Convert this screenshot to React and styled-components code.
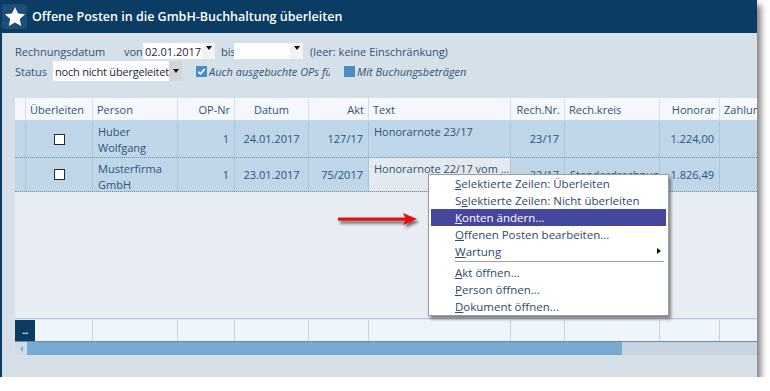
import React from 'react';
import styled, { createGlobalStyle } from 'styled-components';

const GlobalStyle = createGlobalStyle`
  html, body { margin: 0; padding: 0; background: #ffffff; }
  body { font-family: "Open Sans", "Noto Sans", sans-serif; }
`;

const columns = [
  { title: '', align: 'left' },
  { title: 'Überleiten', align: 'left' },
  { title: 'Person', align: 'left' },
  { title: 'OP-Nr', align: 'right' },
  { title: 'Datum', align: 'center' },
  { title: 'Akt', align: 'right' },
  { title: 'Text', align: 'left' },
  { title: 'Rech.Nr.', align: 'right' },
  { title: 'Rech.kreis', align: 'left' },
  { title: 'Honorar', align: 'right' },
  { title: 'Zahlungen', align: 'left' },
];

const rows = [
  {
    person: ['Huber', 'Wolfgang'], op: '1', datum: '24.01.2017', akt: '127/17',
    text: 'Honorarnote 23/17', rechNr: '23/17', kreis: '', honorar: '1.224,00', height: 37,
  },
  {
    person: ['Musterfirma', 'GmbH'], op: '1', datum: '23.01.2017', akt: '75/2017',
    text: 'Honorarnote 22/17 vom ...', rechNr: '22/17', kreis: 'Standardrechnung',
    honorar: '1.826,49', height: 34, focus: true,
  },
];

const menuItems = [
  { pre: '', u: 'S', rest: 'elektierte Zeilen: Überleiten' },
  { pre: 'S', u: 'e', rest: 'lektierte Zeilen: Nicht überleiten' },
  { pre: '', u: 'K', rest: 'onten ändern...', active: true },
  { pre: '', u: 'O', rest: 'ffenen Posten bearbeiten...' },
  { pre: '', u: 'W', rest: 'artung', sub: true },
  'sep',
  { pre: '', u: 'A', rest: 'kt öffnen...' },
  { pre: '', u: 'P', rest: 'erson öffnen...' },
  { pre: '', u: 'D', rest: 'okument öffnen...' },
];

const GRID = '11px 67px 85px 57px 74px 60px 142px 54px 95px 60px 80px';

const StarIcon = () => (
  <svg width="22" height="22" viewBox="0 0 24 24">
    <path
      fill="#ffffff"
      d="M12 1l3.3 7.1 7.7.9-5.8 5.2 1.6 7.7L12 18l-6.8 3.9 1.6-7.7L1 9l7.7-.9z"
    />
  </svg>
);

const CheckMark = () => (
  <svg width="9" height="9" viewBox="0 0 10 10">
    <path d="M1.5 5.2l2.3 2.3L8.6 2.2" fill="none" stroke="#ffffff" strokeWidth="1.8" />
  </svg>
);

const RedArrow = () => (
  <ArrowWrap>
    <svg width="92" height="22" viewBox="0 0 92 22">
      <defs>
        <filter id="arrowShadow" x="-10%" y="-50%" width="130%" height="220%">
          <feDropShadow dx="2" dy="3" stdDeviation="1.6" floodColor="#000" floodOpacity="0.55" />
        </filter>
      </defs>
      <g filter="url(#arrowShadow)">
        <rect x="2" y="6.5" width="70" height="3.2" fill="#e8100c" />
        <path d="M67 2 L81 8.1 L67 14 L70 8.1 Z" fill="#e8100c" />
      </g>
    </svg>
  </ArrowWrap>
);

export default function App() {
  return (
    <>
      <GlobalStyle />
      <Window>
        <TitleBar>
          <StarBox><StarIcon /></StarBox>
          <Title>Offene Posten in die GmbH-Buchhaltung überleiten</Title>
        </TitleBar>
        <Body>
          <FilterRow>
            <Label $w={109}>Rechnungsdatum</Label>
            <Label $w={19}>von</Label>
            <Combo $w={72}>
              <ComboText>02.01.2017</ComboText>
              <DropButton><Triangle /></DropButton>
            </Combo>
            <Label $w={13} $ml={6}>bis</Label>
            <Combo $w={69}>
              <ComboText />
              <DropButton><Triangle /></DropButton>
            </Combo>
            <Label $ml={7}>(leer: keine Einschränkung)</Label>
          </FilterRow>
          <FilterRow $h={20}>
            <Label $w={38}>Status</Label>
            <Combo $w={129} $h={20}>
              <ComboText $tight>noch nicht übergeleitet</ComboText>
              <DropButton $gray><Triangle /></DropButton>
            </Combo>
            <CheckBlue $ml={14}><CheckMark /></CheckBlue>
            <Option $w={121}>Auch ausgebuchte OPs für Zeitraum</Option>
            <CheckBlue $ml={14} />
            <Option>Mit Buchungsbeträgen</Option>
          </FilterRow>

          <Table>
            <HeaderRow>
              {columns.map((c, i) => (
                <HeadCell key={i} $align={c.align}>{c.title}</HeadCell>
              ))}
            </HeaderRow>
            {rows.map((r, i) => (
              <DataRow key={i} $h={r.height}>
                <Cell />
                <Cell $align="center"><Box /></Cell>
                <Cell $top>{r.person[0]}<br />{r.person[1]}</Cell>
                <Cell $align="right">{r.op}</Cell>
                <Cell $align="center">{r.datum}</Cell>
                <Cell $align="right">{r.akt}</Cell>
                <Cell $top $focus={r.focus}>{r.text}</Cell>
                <Cell $align="right">{r.rechNr}</Cell>
                <Cell>{r.kreis}</Cell>
                <Cell $align="right">{r.honorar}</Cell>
                <Cell />
              </DataRow>
            ))}
            <EmptyArea />
            <FooterRow>
              <MoreButton>...</MoreButton>
              {columns.slice(1).map((c, i) => <FootCell key={i} />)}
            </FooterRow>
            <ScrollBar>
              <ScrollLeft><SmallLeft /></ScrollLeft>
              <Thumb />
            </ScrollBar>
          </Table>
        </Body>

        <Menu>
          {menuItems.map((m, i) =>
            m === 'sep' ? (
              <Separator key={i} />
            ) : (
              <MenuItem key={i} $active={m.active}>
                {m.pre}<u>{m.u}</u>{m.rest}
                {m.sub && <SubArrow />}
              </MenuItem>
            )
          )}
        </Menu>
        <RedArrow />
      </Window>
    </>
  );
}

const Window = styled.div`
  position: relative;
  width: 755px;
  height: 377px;
  border-left: 2px solid #0b3c64;
  display: flex;
  flex-direction: column;
  box-shadow: 4px 5px 6px rgba(0, 0, 0, 0.5);
  background: #d5e0e9;
`;

const TitleBar = styled.div`
  height: 33px;
  background: #0b3c64;
  display: flex;
  align-items: center;
  gap: 5px;
  flex-shrink: 0;
`;

const StarBox = styled.div`
  width: 25px;
  height: 25px;
  border-radius: 3px;
  background: #1c4e79;
  display: flex;
  align-items: center;
  justify-content: center;
`;

const Title = styled.div`
  color: #ffffff;
  font-size: 12.5px;
  font-weight: 600;
`;

const Body = styled.div`
  flex: 1;
  padding: 9px 0 0 13px;
  overflow: hidden;
  font-size: 11px;
  color: #2f5377;
`;

const FilterRow = styled.div`
  height: ${p => p.$h || 18}px;
  margin-bottom: 1px;
  display: flex;
  align-items: center;
  white-space: nowrap;
`;

const Label = styled.span`
  width: ${p => (p.$w ? p.$w + 'px' : 'auto')};
  margin-left: ${p => p.$ml || 0}px;
  flex-shrink: 0;
`;

const Combo = styled.div`
  width: ${p => p.$w}px;
  height: ${p => p.$h || 16}px;
  background: #ffffff;
  display: flex;
  align-items: center;
  flex-shrink: 0;
`;

const ComboText = styled.span`
  flex: 1;
  min-width: 0;
  padding-left: 2px;
  font-size: 11px;
  letter-spacing: ${p => (p.$tight ? '-0.2px' : '0')};
  color: #1a2a3a;
  overflow: hidden;
`;

const DropButton = styled.span`
  width: 13px;
  height: 100%;
  background: ${p => (p.$gray ? '#d3d6d9' : '#f2f2f2')};
  display: flex;
  align-items: ${p => (p.$gray ? 'center' : 'flex-start')};
  padding-top: ${p => (p.$gray ? 0 : 3)}px;
  box-sizing: border-box;
  justify-content: center;
  flex-shrink: 0;
`;

const Triangle = styled.span`
  width: 0;
  height: 0;
  border-left: 3.5px solid transparent;
  border-right: 3.5px solid transparent;
  border-top: 4px solid #111;
`;

const CheckBlue = styled.span`
  width: 11px;
  height: 11px;
  margin-left: ${p => p.$ml || 0}px;
  margin-right: 2px;
  background: #4a8dc6;
  display: flex;
  align-items: center;
  justify-content: center;
  flex-shrink: 0;
`;

const Option = styled.span`
  font-style: italic;
  width: ${p => (p.$w ? p.$w + 'px' : 'auto')};
  overflow: hidden;
  flex-shrink: 0;
`;

const Table = styled.div`
  margin-top: 17px;
  display: flex;
  flex-direction: column;
  overflow: hidden;
  color: #2f5377;
`;

const HeaderRow = styled.div`
  display: grid;
  grid-template-columns: ${GRID};
  height: 23px;
  background: #f4f8fc;
  border-bottom: 1px solid #c3d4e3;
  box-sizing: border-box;
`;

const HeadCell = styled.div`
  display: flex;
  align-items: center;
  justify-content: ${p => (p.$align === 'right' ? 'flex-end' : p.$align === 'center' ? 'center' : 'flex-start')};
  padding: 0 4px;
  border-right: 1px solid #d2dfea;
  white-space: nowrap;
  overflow: hidden;
`;

const DataRow = styled.div`
  display: grid;
  grid-template-columns: ${GRID};
  height: ${p => p.$h}px;
  background: #bfd5e8;
  border-bottom: 1px dotted #7f8d98;
  box-sizing: border-box;
`;

const Cell = styled.div`
  display: flex;
  flex-direction: column;
  justify-content: ${p => (p.$top ? 'flex-start' : 'center')};
  align-items: ${p => (p.$align === 'right' ? 'flex-end' : p.$align === 'center' ? 'center' : 'flex-start')};
  padding: ${p => (p.$top ? '3px 5px 0 5px' : '0 5px')};
  line-height: 16px;
  background: ${p => (p.$focus ? '#e2e9ef' : 'transparent')};
  border-right: 1px solid #a9c3d8;
  white-space: nowrap;
  overflow: hidden;
`;

const Box = styled.span`
  width: 9px;
  height: 9px;
  background: #ffffff;
  border: 1px solid #2a2a2a;
`;

const EmptyArea = styled.div`
  height: 126px;
  background: #e7edf2;
  border-bottom: 1px solid #b9cbda;
`;

const FooterRow = styled.div`
  display: grid;
  grid-template-columns: 20px 58px 85px 57px 74px 60px 142px 54px 95px 60px 80px;
  height: 23px;
  background: #eef5fc;
  border-top: 1px solid #dbe7f1;
  border-bottom: 1px solid #6a8aa6;
  box-sizing: border-box;
`;

const MoreButton = styled.div`
  background: #0b3c64;
  color: #ffffff;
  font-size: 8px;
  font-weight: 700;
  display: flex;
  align-items: center;
  justify-content: center;
  letter-spacing: -0.5px;
`;

const FootCell = styled.div`
  border-right: 1px solid #c4d3df;
`;

const ScrollBar = styled.div`
  height: 13px;
  display: flex;
  background: #c7d4df;
`;

const ScrollLeft = styled.div`
  width: 12px;
  background: #cfdbe6;
  display: flex;
  align-items: center;
  justify-content: center;
`;

const SmallLeft = styled.span`
  width: 0;
  height: 0;
  border-top: 3px solid transparent;
  border-bottom: 3px solid transparent;
  border-right: 3px solid #7ea7c8;
`;

const Thumb = styled.div`
  width: 595px;
  background: #78a9d1;
`;

const Menu = styled.div`
  position: absolute;
  left: 426px;
  top: 174px;
  width: 237px;
  padding: 0 1px;
  background: #ffffff;
  border: 1px solid #9a9a9a;
  box-shadow: 2px 3px 3px rgba(0, 0, 0, 0.45);
  font-size: 11.5px;
  color: #2c4b6b;
  z-index: 2;
`;

const MenuItem = styled.div`
  position: relative;
  height: 17px;
  margin: 0 1px;
  padding-left: 24px;
  display: flex;
  align-items: center;
  background: ${p => (p.$active ? '#45469e' : 'transparent')};
  color: ${p => (p.$active ? '#ffffff' : 'inherit')};
  white-space: nowrap;
  u { text-underline-offset: 1px; }
`;

const SubArrow = styled.span`
  position: absolute;
  right: 5px;
  top: 5px;
  width: 0;
  height: 0;
  border-top: 3.5px solid transparent;
  border-bottom: 3.5px solid transparent;
  border-left: 4px solid #111;
`;

const Separator = styled.div`
  height: 4px;
  margin: 0 3px 0 25px;
  display: flex;
  align-items: center;
  &::after {
    content: '';
    flex: 1;
    height: 1px;
    background: #a0a0a0;
    border-bottom: 1px solid #ffffff;
  }
`;

const ArrowWrap = styled.div`
  position: absolute;
  left: 334px;
  top: 211px;
  z-index: 3;
  line-height: 0;
`;
